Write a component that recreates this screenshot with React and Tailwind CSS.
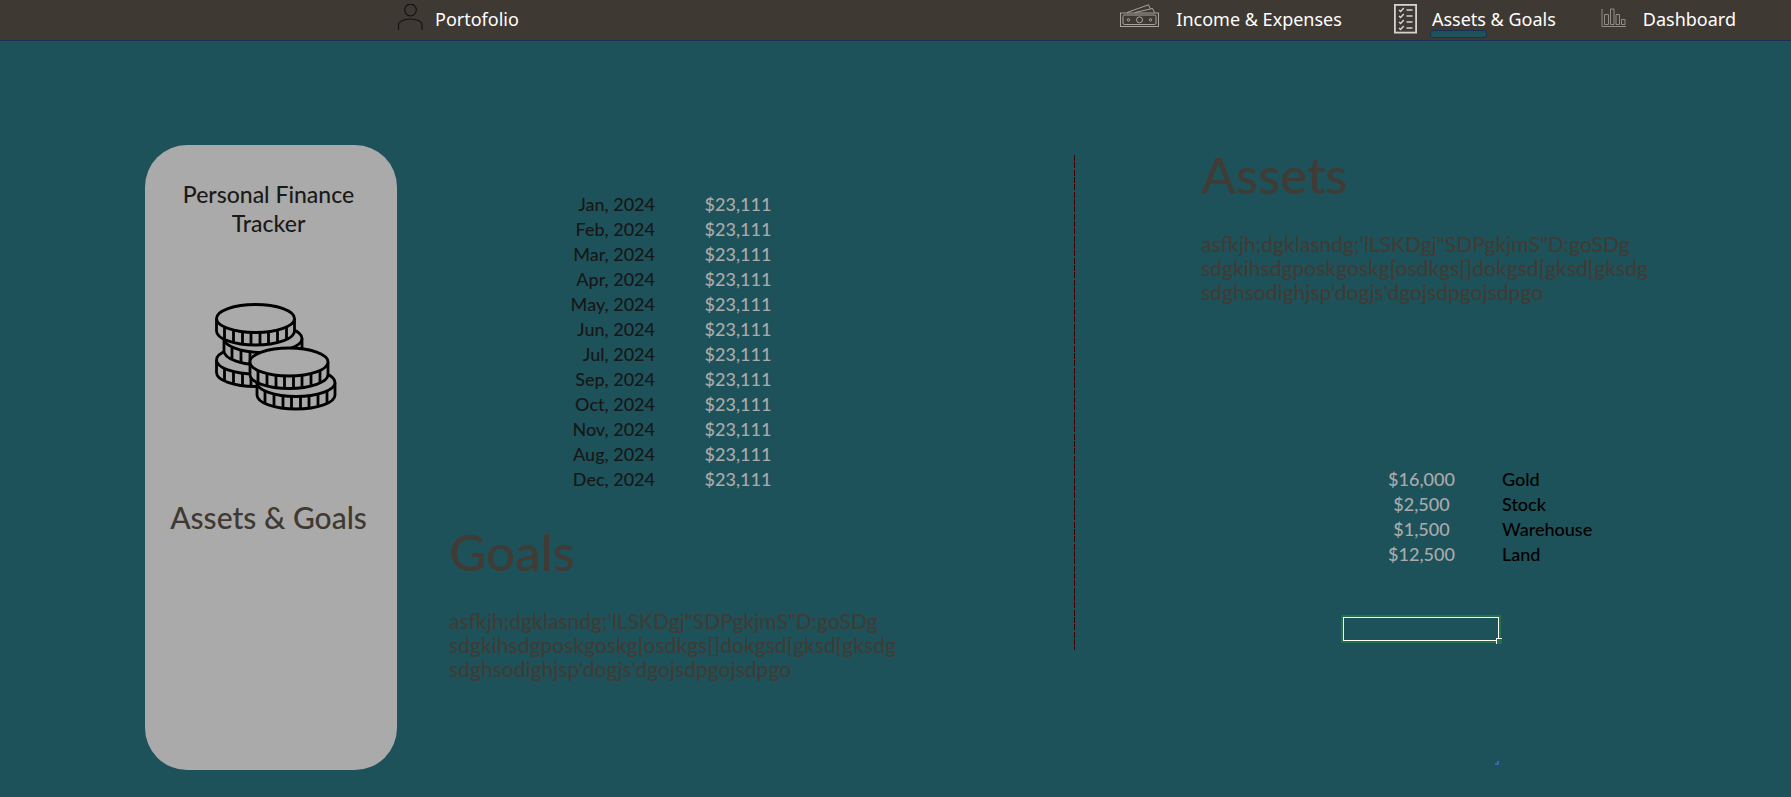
import React from "react";

const months = ["Jan", "Feb", "Mar", "Apr", "May", "Jun", "Jul", "Sep", "Oct", "Nov", "Aug", "Dec"];

const assets = [
  ["$16,000", "Gold"],
  ["$2,500", "Stock"],
  ["$1,500", "Warehouse"],
  ["$12,500", "Land"],
];

const notes = [
  "asfkjh;dgklasndg;'lLSKDgj\"SDPgkjmS\"D:goSDg",
  "sdgkihsdgposkgoskg[osdkgs[]dokgsd[gksd[gksdg",
  "sdghsodighjsp'dogjs'dgojsdpgojsdpgo",
];

function PersonIcon() {
  return (
    <svg width="26" height="28" viewBox="0 0 26 28" fill="none" stroke="#15130f" strokeWidth="1.2" aria-hidden="true">
      <circle cx="13.500" cy="6" r="5.800" />
      <path d="M1.500 26v-5.500c0-2 4-5.500 12-5.500s11.500 3.500 11.500 5.500V26" />
    </svg>
  );
}

function CashIcon() {
  return (
    <svg width="39" height="24" viewBox="0 0 39 24" fill="none" stroke="#b3b0aa" strokeWidth="0.9" aria-hidden="true">
      <rect x="0.500" y="9" width="38" height="13.500" />
      <rect x="3" y="11" width="33" height="9.500" rx="1.500" />
      <circle cx="19.500" cy="15.800" r="3" />
      <circle cx="8.500" cy="15.800" r="1.200" />
      <circle cx="30.500" cy="15.800" r="1.200" />
      <path d="M7 8.500 28.500 0.800l1.800 4M15 8.500l17.500-4L34.500 8.500" />
    </svg>
  );
}

function ChecklistIcon() {
  return (
    <svg width="23" height="30" viewBox="0 0 23 30" fill="none" stroke="#d5d3d0" aria-hidden="true">
      <rect x="0.900" y="0.900" width="21.200" height="27.700" strokeWidth="1.800" />
      {[6, 12, 18, 24].map((y) => (
        <path key={y} d={`M5 ${y}l1.600 1.500 3.200-3.500M12.500 ${y}h6`} strokeWidth="1.500" />
      ))}
    </svg>
  );
}

function BarsIcon() {
  return (
    <svg width="25" height="20" viewBox="0 0 25 20" fill="none" stroke="#918e88" strokeWidth="1" aria-hidden="true">
      <path d="M1 1v17.500h24M3.500 16.500v-10h4v10zM9.500 16.500V1h3.500v15.500zM15 16.500v-10h3.500v10zM20.500 16.500v-5H24v5z" />
    </svg>
  );
}

function Coin({ x, y }) {
  const rx = 39;
  const ry = 14;
  const ticks = [-31, -22, -13, -4.5, 4.5, 13, 22, 31];
  return (
    <g transform={`translate(${x} ${y})`}>
      <path d={`M${-rx} 0v12.500a${rx} ${ry} 0 0 0 ${rx * 2} 0v-12.500`} />
      <ellipse rx={rx} ry={ry} />
      {ticks.map((t) => {
        const e = ry * Math.sqrt(1 - (t * t) / (rx * rx));
        return <path key={t} d={`M${t} ${e}v12.500`} />;
      })}
    </g>
  );
}

function CoinsIcon() {
  return (
    <svg width="122" height="108" viewBox="0 0 122 108" fill="#aaaaaa" stroke="#000" strokeWidth="2.800" aria-hidden="true">
      <Coin x={40.500} y={57} />
      <Coin x={48} y={35.500} />
      <Coin x={40.500} y={15.500} />
      <Coin x={81} y={79.500} />
      <Coin x={74} y={59} />
    </svg>
  );
}

function Notes() {
  return (
    <p className="text-[21px] leading-[24px] font-medium text-[#403b34]">
      {notes.map((line) => (
        <span key={line} className="block whitespace-nowrap">{line}</span>
      ))}
    </p>
  );
}

export default function App() {
  return (
    <div className="flex min-h-screen flex-col bg-[#1d525b] font-['Lato',sans-serif]">
      <header className="flex h-[41px] items-start justify-between border-b border-[#1b2f55] bg-[#3f3933] pr-[55px] pl-[397px] pt-[4px] font-['Noto_Sans',sans-serif] text-[18px] leading-[30px] text-white">
        <a href="#portfolio" className="flex gap-[12px]">
          <PersonIcon />
          <span>Portofolio</span>
        </a>
        <nav className="flex">
          <a href="#income" className="mr-[52px] flex gap-[17px]">
            <CashIcon />
            <span>Income &amp; Expenses</span>
          </a>
          <a href="#assets" aria-current="page" className="relative mr-[45px] flex gap-[15px]">
            <ChecklistIcon />
            <span>Assets &amp; Goals</span>
            <span className="absolute top-[26px] left-[36px] h-[8px] w-[57px] rounded-[3px] border border-[#1b2f55] bg-[#1d525b]" />
          </a>
          <a href="#dashboard" className="flex gap-[17px]">
            <span className="pt-[4px]"><BarsIcon /></span>
            <span>Dashboard</span>
          </a>
        </nav>
      </header>

      <main className="grid flex-1 grid-cols-[252px_677fr_717fr] pl-[145px]">
        <aside className="mt-[104px] mb-[27px] flex flex-col items-center rounded-[42px] bg-[#aaaaaa] pt-[35px] pr-[5px]">
          <p className="w-[200px] text-center text-[23px] leading-[29px] font-medium text-[#1b1a18]">Personal Finance Tracker</p>
          <div className="mt-[65px] ml-[15px]"><CoinsIcon /></div>
          <h1 className="mt-[88px] text-[30px] leading-[36px] font-medium text-[#3f3931]">Assets &amp; Goals</h1>
        </aside>

        <section className="pt-[151px] pl-[52px]">
          <table className="ml-[101px] text-[18px] leading-[25px] font-medium">
            <tbody>
              {months.map((m) => (
                <tr key={m}>
                  <td className="w-[105px] p-0 text-right text-[#171717]">{m}, 2024</td>
                  <td className="w-[166px] p-0 text-center text-[#aaaaaa]">$23,111</td>
                </tr>
              ))}
            </tbody>
          </table>
          <h2 className="mt-[29px] text-[51px] leading-[62px] font-medium text-[#403b34]">Goals</h2>
          <div className="mt-[26px]"><Notes /></div>
        </section>

        <section className="flex pt-[104px]">
          <div className="mt-[10px] h-[495px] w-px bg-[repeating-linear-gradient(#400000_0px,#400000_6px,transparent_6px,transparent_7px,#400000_7px,#400000_13px,transparent_13px,transparent_15px,#400000_15px,#400000_21px,transparent_21px,transparent_22px)]" />
          <div className="pl-[126px]">
            <h2 className="-mt-px text-[51px] leading-[62px] font-medium text-[#403b34]">Assets</h2>
            <div className="mt-[26px]"><Notes /></div>
            <table className="mt-[163px] ml-[140px] text-[18px] leading-[25px] font-medium">
              <tbody>
                {assets.map(([value, name]) => (
                  <tr key={name}>
                    <td className="w-[161px] p-0 text-center text-[#aaaaaa]">{value}</td>
                    <td className="w-[120px] p-0 text-black">{name}</td>
                  </tr>
                ))}
              </tbody>
            </table>
            <div className="relative mt-[48px] ml-[140px] h-[28px] w-[160px] border-2 border-[#217346]">
              <input aria-label="Selected cell" className="block h-full w-full border border-white bg-transparent px-1 outline-none" />
              <span className="absolute -right-[3px] -bottom-[3px] h-[6px] w-[6px] border-t border-l border-white bg-[#217346]" />
            </div>
            <svg className="mt-[118px] ml-[294px]" width="4" height="4" viewBox="0 0 4 4" fill="#4062b0" aria-hidden="true">
              <path d="M2 0h2v4H0V2h2z" />
            </svg>
          </div>
        </section>
      </main>
    </div>
  );
}
